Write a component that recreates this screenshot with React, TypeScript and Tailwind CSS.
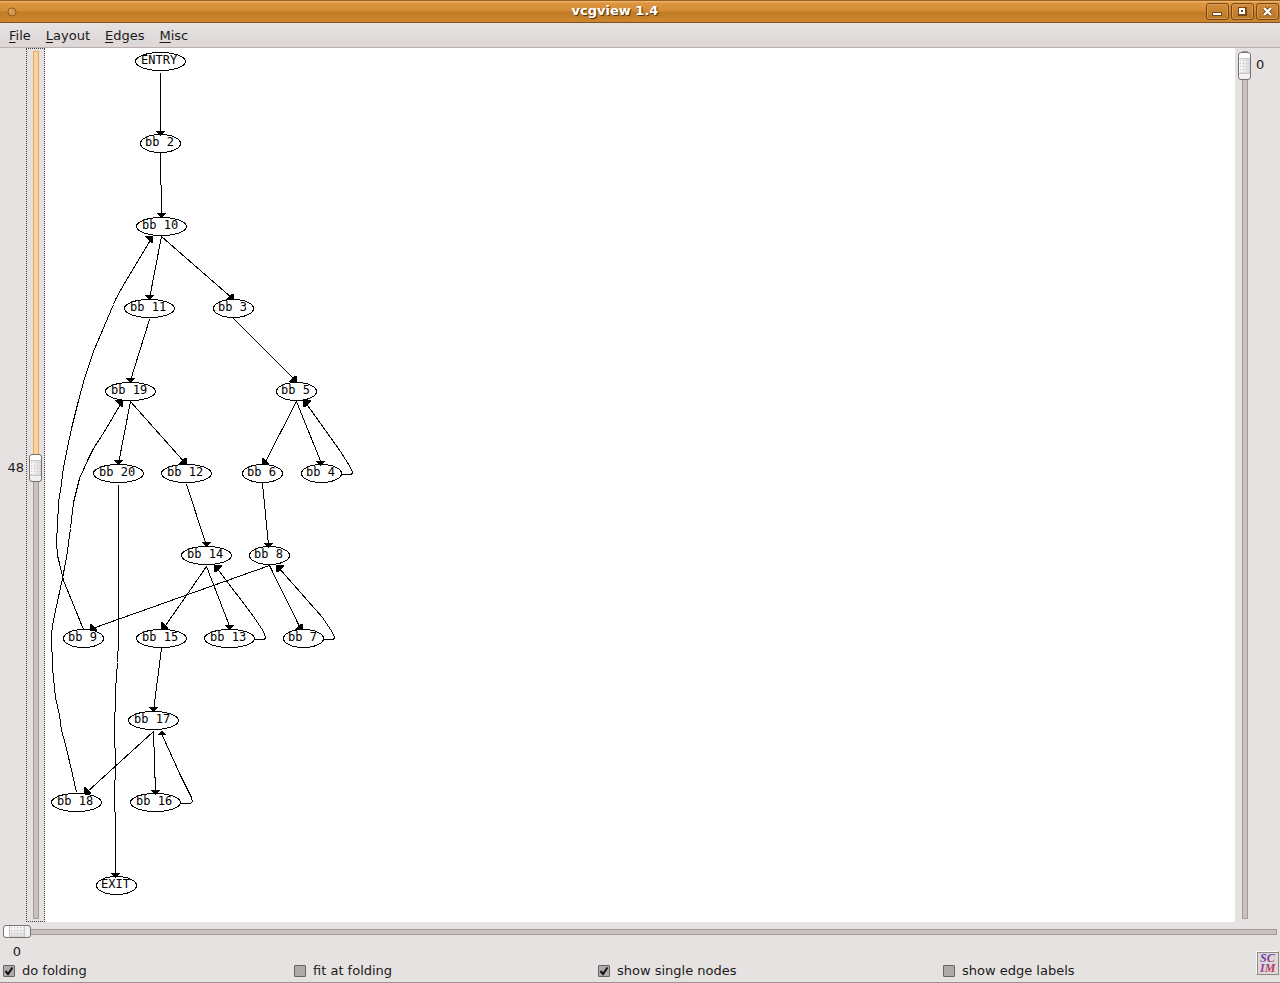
import { useState } from "react";

type ArrowKind = "down" | "up" | "downRight" | "downLeft" | "upRight" | "upLeft";
type GraphNode = { label: string; x: number; y: number };
type Edge = { points: string; arrow: ArrowKind; at: [number, number] };

const nodes: GraphNode[] = [
  { label: "ENTRY", x: 160, y: 61 },
  { label: "bb 2", x: 160, y: 143 },
  { label: "bb 10", x: 161, y: 226 },
  { label: "bb 11", x: 149, y: 308 },
  { label: "bb 3", x: 233, y: 308 },
  { label: "bb 19", x: 130, y: 391 },
  { label: "bb 5", x: 296, y: 391 },
  { label: "bb 20", x: 118, y: 473 },
  { label: "bb 12", x: 186, y: 473 },
  { label: "bb 6", x: 262, y: 473 },
  { label: "bb 4", x: 321, y: 473 },
  { label: "bb 14", x: 206, y: 555 },
  { label: "bb 8", x: 269, y: 555 },
  { label: "bb 9", x: 83, y: 638 },
  { label: "bb 15", x: 161, y: 638 },
  { label: "bb 13", x: 229, y: 638 },
  { label: "bb 7", x: 303, y: 638 },
  { label: "bb 17", x: 153, y: 720 },
  { label: "bb 18", x: 76, y: 802 },
  { label: "bb 16", x: 155, y: 802 },
  { label: "EXIT", x: 116, y: 885 },
];

const edges: Edge[] = [
  { points: "160,72 160,133", arrow: "down", at: [160, 135] },
  { points: "160,153 161,215", arrow: "down", at: [161, 217] },
  { points: "161,236 149,298", arrow: "down", at: [149, 299] },
  { points: "161,236 232,298", arrow: "downRight", at: [233, 300] },
  { points: "149,319 130,380", arrow: "down", at: [130, 382] },
  { points: "233,318 296,381", arrow: "downRight", at: [296, 382] },
  { points: "130,401 118,463", arrow: "down", at: [118, 464] },
  { points: "130,401 185,463", arrow: "downRight", at: [186, 464] },
  { points: "296,401 264,463", arrow: "downLeft", at: [262, 465] },
  { points: "296,401 321,463", arrow: "down", at: [320, 465] },
  { points: "341,474 351,474 352,472 350,467 340,451 305,402", arrow: "upLeft", at: [303, 400] },
  { points: "186,484 206,545", arrow: "down", at: [206, 546] },
  { points: "262,483 268,545", arrow: "down", at: [268, 547] },
  { points: "206,566 163,628", arrow: "downLeft", at: [161, 629] },
  { points: "206,566 230,628", arrow: "down", at: [229, 629] },
  { points: "254,639 264,639 265,637 263,631 253,616 216,567", arrow: "upLeft", at: [214, 565] },
  { points: "269,565 92,628", arrow: "downLeft", at: [90, 631] },
  { points: "269,565 300,628", arrow: "downRight", at: [302, 630] },
  { points: "323,639 333,639 334,637 332,632 322,617 278,567", arrow: "upLeft", at: [276, 565] },
  { points: "161,648 153,710", arrow: "down", at: [153, 711] },
  { points: "153,731 86,792", arrow: "downLeft", at: [84, 794] },
  { points: "153,731 155,792", arrow: "down", at: [155, 794] },
  { points: "180,803 190,803 192,801 191,797 180,775 161,733", arrow: "up", at: [161, 730] },
  {
    points: "83,629 63,580 59,563 57,555 56,541 57,525 58,502 60,490 63,467 66,452 71,428 78,400 84,378 93,351 107,318 113,304 115,299 121,288 151,238",
    arrow: "upRight",
    at: [152, 236],
  },
  {
    points: "76,792 72,774 65,744 61,730 59,715 55,697 52,667 51,635 52,625 55,610 62,578 66,557 70,528 73,502 79,478 84,467 88,458 93,448 104,431 121,402",
    arrow: "upRight",
    at: [122, 400],
  },
  { points: "118,484 118,640 117,662 115,690 114,735 115,760 114,800 115,822 115,875", arrow: "down", at: [115, 877] },
];

function arrowPoints(kind: ArrowKind, x: number, y: number) {
  switch (kind) {
    case "down":
      return `${x - 4},${y - 4} ${x + 5},${y - 4} ${x + 1},${y + 1} ${x},${y + 1}`;
    case "up":
      return `${x - 4},${y + 5} ${x + 5},${y + 5} ${x + 1},${y + 1} ${x},${y + 1}`;
    case "downRight":
      return `${x + 1},${y} ${x - 7},${y} ${x - 7},${y - 1} ${x - 1},${y - 6} ${x + 1},${y - 6}`;
    case "downLeft":
      return `${x},${y} ${x},${y - 7} ${x + 2},${y - 7} ${x + 7},${y - 1} ${x + 7},${y}`;
    case "upRight":
      return `${x + 1},${y} ${x - 7},${y} ${x - 7},${y + 1} ${x - 1},${y + 7} ${x + 1},${y + 7}`;
    case "upLeft":
      return `${x},${y} ${x + 8},${y} ${x + 8},${y + 1} ${x + 2},${y + 7} ${x},${y + 7}`;
  }
}

function FlowGraph() {
  return (
    <svg
      width="330"
      height="860"
      viewBox="45 48 330 860"
      shapeRendering="crispEdges"
      role="img"
      aria-label="Control flow graph"
      className="block"
    >
      {edges.map((e) => (
        <g key={e.points}>
          <polyline points={e.points} transform="translate(0.5 0.5)" fill="none" stroke="#000" />
          <polygon points={arrowPoints(e.arrow, e.at[0], e.at[1])} fill="#000" />
        </g>
      ))}
      {nodes.map((n) => {
        const wide = n.label.length > 4;
        return (
          <g key={n.label}>
            <ellipse cx={n.x + 0.5} cy={n.y + 0.5} rx={wide ? 25 : 20} ry={9} fill="none" stroke="#000" />
            <text
              x={n.x - (wide ? 19 : 15)}
              y={n.y + 3}
              className="font-['DejaVu_Sans_Mono',monospace] text-[12px]"
            >
              {n.label}
            </text>
          </g>
        );
      })}
    </svg>
  );
}

const verticalSlider =
  "w-[14px] appearance-none bg-transparent outline-none [writing-mode:vertical-lr] " +
  "[&::-webkit-slider-runnable-track]:w-[6px] [&::-webkit-slider-runnable-track]:border [&::-webkit-slider-runnable-track]:border-[#a39a9a] [&::-webkit-slider-runnable-track]:bg-[#cac2c1] " +
  "[&::-webkit-slider-thumb]:-my-px [&::-webkit-slider-thumb]:-ml-[5px] [&::-webkit-slider-thumb]:box-border [&::-webkit-slider-thumb]:h-[28px] [&::-webkit-slider-thumb]:w-[13px] [&::-webkit-slider-thumb]:appearance-none [&::-webkit-slider-thumb]:rounded-[3px] [&::-webkit-slider-thumb]:border [&::-webkit-slider-thumb]:border-[#777170] " +
  "[&::-webkit-slider-thumb]:bg-[linear-gradient(#fff_0_5px,#c9c5c4_5px_6px,transparent_6px_20px,#c9c5c4_20px_21px,#f2f1f1_21px),radial-gradient(#c4c0bf_20%,transparent_30%),linear-gradient(90deg,#fafafa,#dddbda)] [&::-webkit-slider-thumb]:bg-[length:100%_100%,3px_3px,100%_100%]";

const horizontalSlider =
  "block h-[14px] w-full appearance-none bg-transparent outline-none " +
  "[&::-webkit-slider-runnable-track]:h-[6px] [&::-webkit-slider-runnable-track]:border [&::-webkit-slider-runnable-track]:border-[#a39a9a] [&::-webkit-slider-runnable-track]:bg-[#cac2c1] " +
  "[&::-webkit-slider-thumb]:-mx-px [&::-webkit-slider-thumb]:-mt-[5px] [&::-webkit-slider-thumb]:box-border [&::-webkit-slider-thumb]:h-[13px] [&::-webkit-slider-thumb]:w-[28px] [&::-webkit-slider-thumb]:appearance-none [&::-webkit-slider-thumb]:rounded-[3px] [&::-webkit-slider-thumb]:border [&::-webkit-slider-thumb]:border-[#777170] " +
  "[&::-webkit-slider-thumb]:bg-[linear-gradient(90deg,#fff_0_5px,#c9c5c4_5px_6px,transparent_6px_20px,#c9c5c4_20px_21px,#f2f1f1_21px),radial-gradient(#c4c0bf_20%,transparent_30%),linear-gradient(#fafafa,#dddbda)] [&::-webkit-slider-thumb]:bg-[length:100%_100%,3px_3px,100%_100%]";

const zoomFill =
  " [&::-webkit-slider-runnable-track]:[border-image:linear-gradient(#e2a765_var(--fill),#a39a9a_var(--fill))_1] [&::-webkit-slider-runnable-track]:bg-[linear-gradient(#fdd39c_var(--fill),#cac2c1_var(--fill))]";

function ThumbLabel({ id, value, max, vertical }: { id: string; value: number; max: number; vertical?: boolean }) {
  return (
    <div className={vertical ? "flex flex-col py-[3px]" : "flex px-[3px]"}>
      <span style={{ flexGrow: value }} />
      <label
        htmlFor={id}
        className={vertical ? "flex h-[28px] items-center" : "w-[28px] text-center leading-4"}
      >
        {value}
      </label>
      <span style={{ flexGrow: max - value }} />
    </div>
  );
}

function CheckOption({ id, label, initial }: { id: string; label: string; initial: boolean }) {
  const [on, setOn] = useState(initial);
  return (
    <label htmlFor={id} className="flex items-center gap-[7px]">
      <span className="grid size-3">
        <input
          id={id}
          type="checkbox"
          checked={on}
          onChange={() => setOn(!on)}
          className="col-start-1 row-start-1 size-3 appearance-none rounded-[1px] border border-[#686463] bg-[#aeaaa9]"
        />
        {on && (
          <svg viewBox="0 0 12 12" className="pointer-events-none col-start-1 row-start-1 size-3">
            <path d="M2.5 6 L5 9 L9.5 2.5" fill="none" stroke="#111" strokeWidth="2" />
          </svg>
        )}
      </span>
      {label}
    </label>
  );
}

const titleButton =
  "flex h-[17px] w-[23px] items-center justify-center rounded-[3px] border border-[#74481a] bg-linear-to-b from-[#d48d3a] to-[#b97724] shadow-[inset_0_0_0_1px_#d99a50]";

const menus = ["File", "Layout", "Edges", "Misc"];

export default function App() {
  const [zoom, setZoom] = useState(48);
  const [vert, setVert] = useState(0);
  const [horiz, setHoriz] = useState(0);

  return (
    <div className="relative flex h-screen flex-col border-b border-[#9c9192] bg-[#e6e2e1] font-['DejaVu_Sans',sans-serif] text-[13px] text-[#1a1a1a]">
      <header className="flex h-[23px] shrink-0 items-center border-y border-t-[#98601f] border-b-[#805022] bg-[linear-gradient(#f2bb73_0,#dd9641_2px,#d58c35_10px,#bf7b25_11px,#cd872f_100%)] pr-[1px] pl-[7px]">
        <button aria-label="Window menu" className="flex">
          <svg width="10" height="10" viewBox="0 0 10 10">
            <circle cx="5" cy="5" r="4" fill="#d9974b" stroke="#8a5a20" />
            <path d="M2.5 5A2.5 2.5 0 0 1 5 2.5" fill="none" stroke="#f0bd7c" />
          </svg>
        </button>
        <h1 className="grow pb-[2px] pl-[7px] text-center text-[13px] leading-4 font-bold text-white [text-shadow:1px_1px_1px_#4a2c08]">
          vcgview 1.4
        </h1>
        <div className="flex gap-[2px]">
          <button aria-label="Minimize" className={titleButton}>
            <svg width="11" height="11" viewBox="0 0 11 11" shapeRendering="crispEdges">
              <rect x="0" y="6" width="10" height="4" fill="#74481a" />
              <rect x="1" y="7" width="8" height="2" fill="#fff" />
            </svg>
          </button>
          <button aria-label="Maximize" className={titleButton}>
            <svg width="11" height="11" viewBox="0 0 11 11" shapeRendering="crispEdges">
              <rect x="1" y="1" width="9" height="9" fill="#74481a" />
              <path d="M2 2H8V8H2ZM4 4V6H6V4Z" fillRule="evenodd" fill="#fff" />
            </svg>
          </button>
          <button aria-label="Close" className={titleButton}>
            <svg width="11" height="11" viewBox="0 0 11 11">
              <path d="M2 2L9 9M9 2L2 9" stroke="#74481a" strokeWidth="4" />
              <path d="M2 2L9 9M9 2L2 9" stroke="#fff" strokeWidth="2.4" />
            </svg>
          </button>
        </div>
      </header>

      <nav className="flex h-[25px] shrink-0 items-center gap-[15px] border-b border-[#b9afae] bg-linear-to-b from-[#e6e2e2] to-[#ddd7d6] px-[9px] pt-[2px]">
        {menus.map((m) => (
          <button key={m} className="leading-4">
            <span className="underline underline-offset-2">{m[0]}</span>
            {m.slice(1)}
          </button>
        ))}
      </nav>

      <main className="flex min-h-0 grow">
        <div className="flex w-[26px] justify-end pr-[2px]">
          <ThumbLabel id="zoom" value={zoom} max={100} vertical />
        </div>
        <div className="flex w-[19px] justify-center border border-dotted border-[#443c3c] py-[2px]">
          <input
            id="zoom"
            type="range"
            min={0}
            max={100}
            value={zoom}
            onChange={(e) => setZoom(Number(e.target.value))}
            style={{ "--fill": `${zoom}%` } as React.CSSProperties}
            className={verticalSlider + zoomFill}
          />
        </div>
        <section className="min-w-0 grow overflow-hidden bg-white">
          <FlowGraph />
        </section>
        <div className="flex w-[19px] justify-center py-[3px]">
          <input
            id="vertical"
            type="range"
            min={0}
            max={100}
            value={vert}
            onChange={(e) => setVert(Number(e.target.value))}
            className={verticalSlider}
          />
        </div>
        <div className="flex w-[26px] pl-[2px]">
          <ThumbLabel id="vertical" value={vert} max={100} vertical />
        </div>
      </main>

      <footer className="shrink-0">
        <div className="px-[3px] pt-[3px]">
          <input
            id="horizontal"
            type="range"
            min={0}
            max={100}
            value={horiz}
            onChange={(e) => setHoriz(Number(e.target.value))}
            className={horizontalSlider}
          />
        </div>
        <div className="pt-[5px]">
          <ThumbLabel id="horizontal" value={horiz} max={100} />
        </div>
        <div className="grid grid-cols-[291fr_304fr_345fr_337fr] pt-[3px] pb-[3px] pl-[3px] leading-4">
          <CheckOption id="fold" label="do folding" initial />
          <CheckOption id="fit" label="fit at folding" initial={false} />
          <CheckOption id="single" label="show single nodes" initial />
          <CheckOption id="labels" label="show edge labels" initial={false} />
        </div>
      </footer>

      <button
        aria-label="Input method"
        className="absolute right-px bottom-[7px] border border-[#fbfaf9] border-r-[#8d8886] border-b-[#8d8886]"
      >
        <svg width="21" height="22" viewBox="0 0 21 22" className="block">
          <defs>
            <linearGradient id="scim" gradientUnits="userSpaceOnUse" x1="3" y1="3" x2="18" y2="20">
              <stop offset="0" stopColor="#4b3fb8" />
              <stop offset="0.5" stopColor="#963f96" />
              <stop offset="1" stopColor="#d8304a" />
            </linearGradient>
          </defs>
          <rect width="21" height="22" fill="#8f8b88" />
          <rect x="1" y="1" width="20" height="21" fill="#ddd9d5" />
          <g fill="url(#scim)" className="font-['Liberation_Serif',serif] text-[12px] font-bold italic">
            <text x="3" y="10">SC</text>
            <text x="3" y="20">IM</text>
          </g>
        </svg>
      </button>
    </div>
  );
}
